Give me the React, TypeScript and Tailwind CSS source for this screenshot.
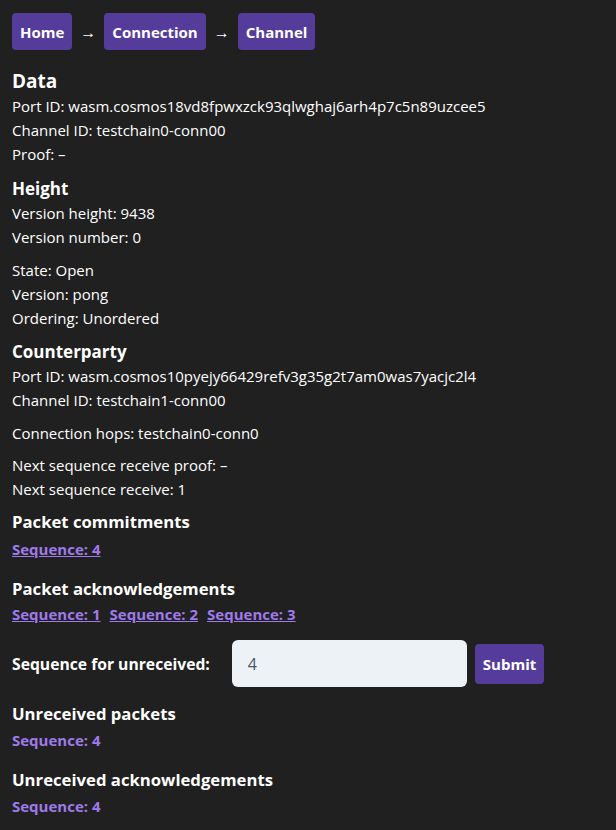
const font = { fontFamily: '"Open Sans", "Noto Sans", sans-serif' };

function Crumb({ label }: { label: string }) {
  return (
    <a href="#" className="h-[37px] px-2 flex items-center rounded bg-[#553c9a] text-white font-bold text-[15px]">
      {label}
    </a>
  );
}

function SeqLink({ n, underline = true }: { n: number; underline?: boolean }) {
  return (
    <a href="#" className={`text-[#9f7aea] font-bold text-[15px] leading-[24px] ${underline ? 'underline' : ''}`}>
      Sequence: {n}
    </a>
  );
}

export default function App() {
  return (
    <div style={font} className="min-h-screen bg-[#202020] text-white text-[15px] leading-[24px] px-3 pt-[13px] pb-4">
      <nav className="flex items-center gap-[8px]">
        <Crumb label="Home" />
        <span className="text-[16px]">→</span>
        <Crumb label="Connection" />
        <span className="text-[16px]">→</span>
        <Crumb label="Channel" />
      </nav>

      <h2 className="mt-[18px] text-[19px] font-bold leading-[26px]">Data</h2>
      <p>Port ID: wasm.cosmos18vd8fpwxzck93qlwghaj6arh4p7c5n89uzcee5</p>
      <p>Channel ID: testchain0-conn00</p>
      <p>Proof: –</p>

      <h3 className="mt-[11px] text-[17px] font-bold leading-[24px]">Height</h3>
      <p>Version height: 9438</p>
      <p>Version number: 0</p>

      <div className="mt-[9px]">
        <p>State: Open</p>
        <p>Version: pong</p>
        <p>Ordering: Unordered</p>
      </div>

      <h3 className="mt-[10px] text-[17px] font-bold leading-[24px]">Counterparty</h3>
      <p>Port ID: wasm.cosmos10pyejy66429refv3g35g2t7am0was7yacjc2l4</p>
      <p>Channel ID: testchain1-conn00</p>

      <p className="mt-[9px]">Connection hops: testchain0-conn0</p>

      <div className="mt-[8px]">
        <p>Next sequence receive proof: –</p>
        <p>Next sequence receive: 1</p>
      </div>

      <h3 className="mt-[9px] text-[16.7px] font-bold leading-[24px]">Packet commitments</h3>
      <div className="mt-[3px] flex gap-[9px]">
        <SeqLink n={4} />
      </div>

      <h3 className="mt-[16px] text-[16.7px] font-bold leading-[24px]">Packet acknowledgements</h3>
      <div className="mt-[1px] flex gap-[9px]">
        <SeqLink n={1} />
        <SeqLink n={2} />
        <SeqLink n={3} />
      </div>

      <div className="mt-[14px] flex items-center">
        <label className="text-[15.7px] font-bold mr-[22px]">Sequence for unreceived:</label>
        <input
          type="number"
          defaultValue={4}
          className="w-[235px] h-[47px] rounded-md bg-[#edf2f7] text-[#4a5568] px-[16px] text-[16px] outline-none"
        />
        <button className="ml-2 h-[40px] px-2 rounded bg-[#553c9a] text-white font-bold text-[15px]">Submit</button>
      </div>

      <h3 className="mt-[15px] text-[16.7px] font-bold leading-[24px]">Unreceived packets</h3>
      <div className="mt-[2px]">
        <SeqLink n={4} underline={false} />
      </div>

      <h3 className="mt-[16px] text-[16.7px] font-bold leading-[24px]">Unreceived acknowledgements</h3>
      <div className="mt-[2px]">
        <SeqLink n={4} underline={false} />
      </div>
    </div>
  );
}
